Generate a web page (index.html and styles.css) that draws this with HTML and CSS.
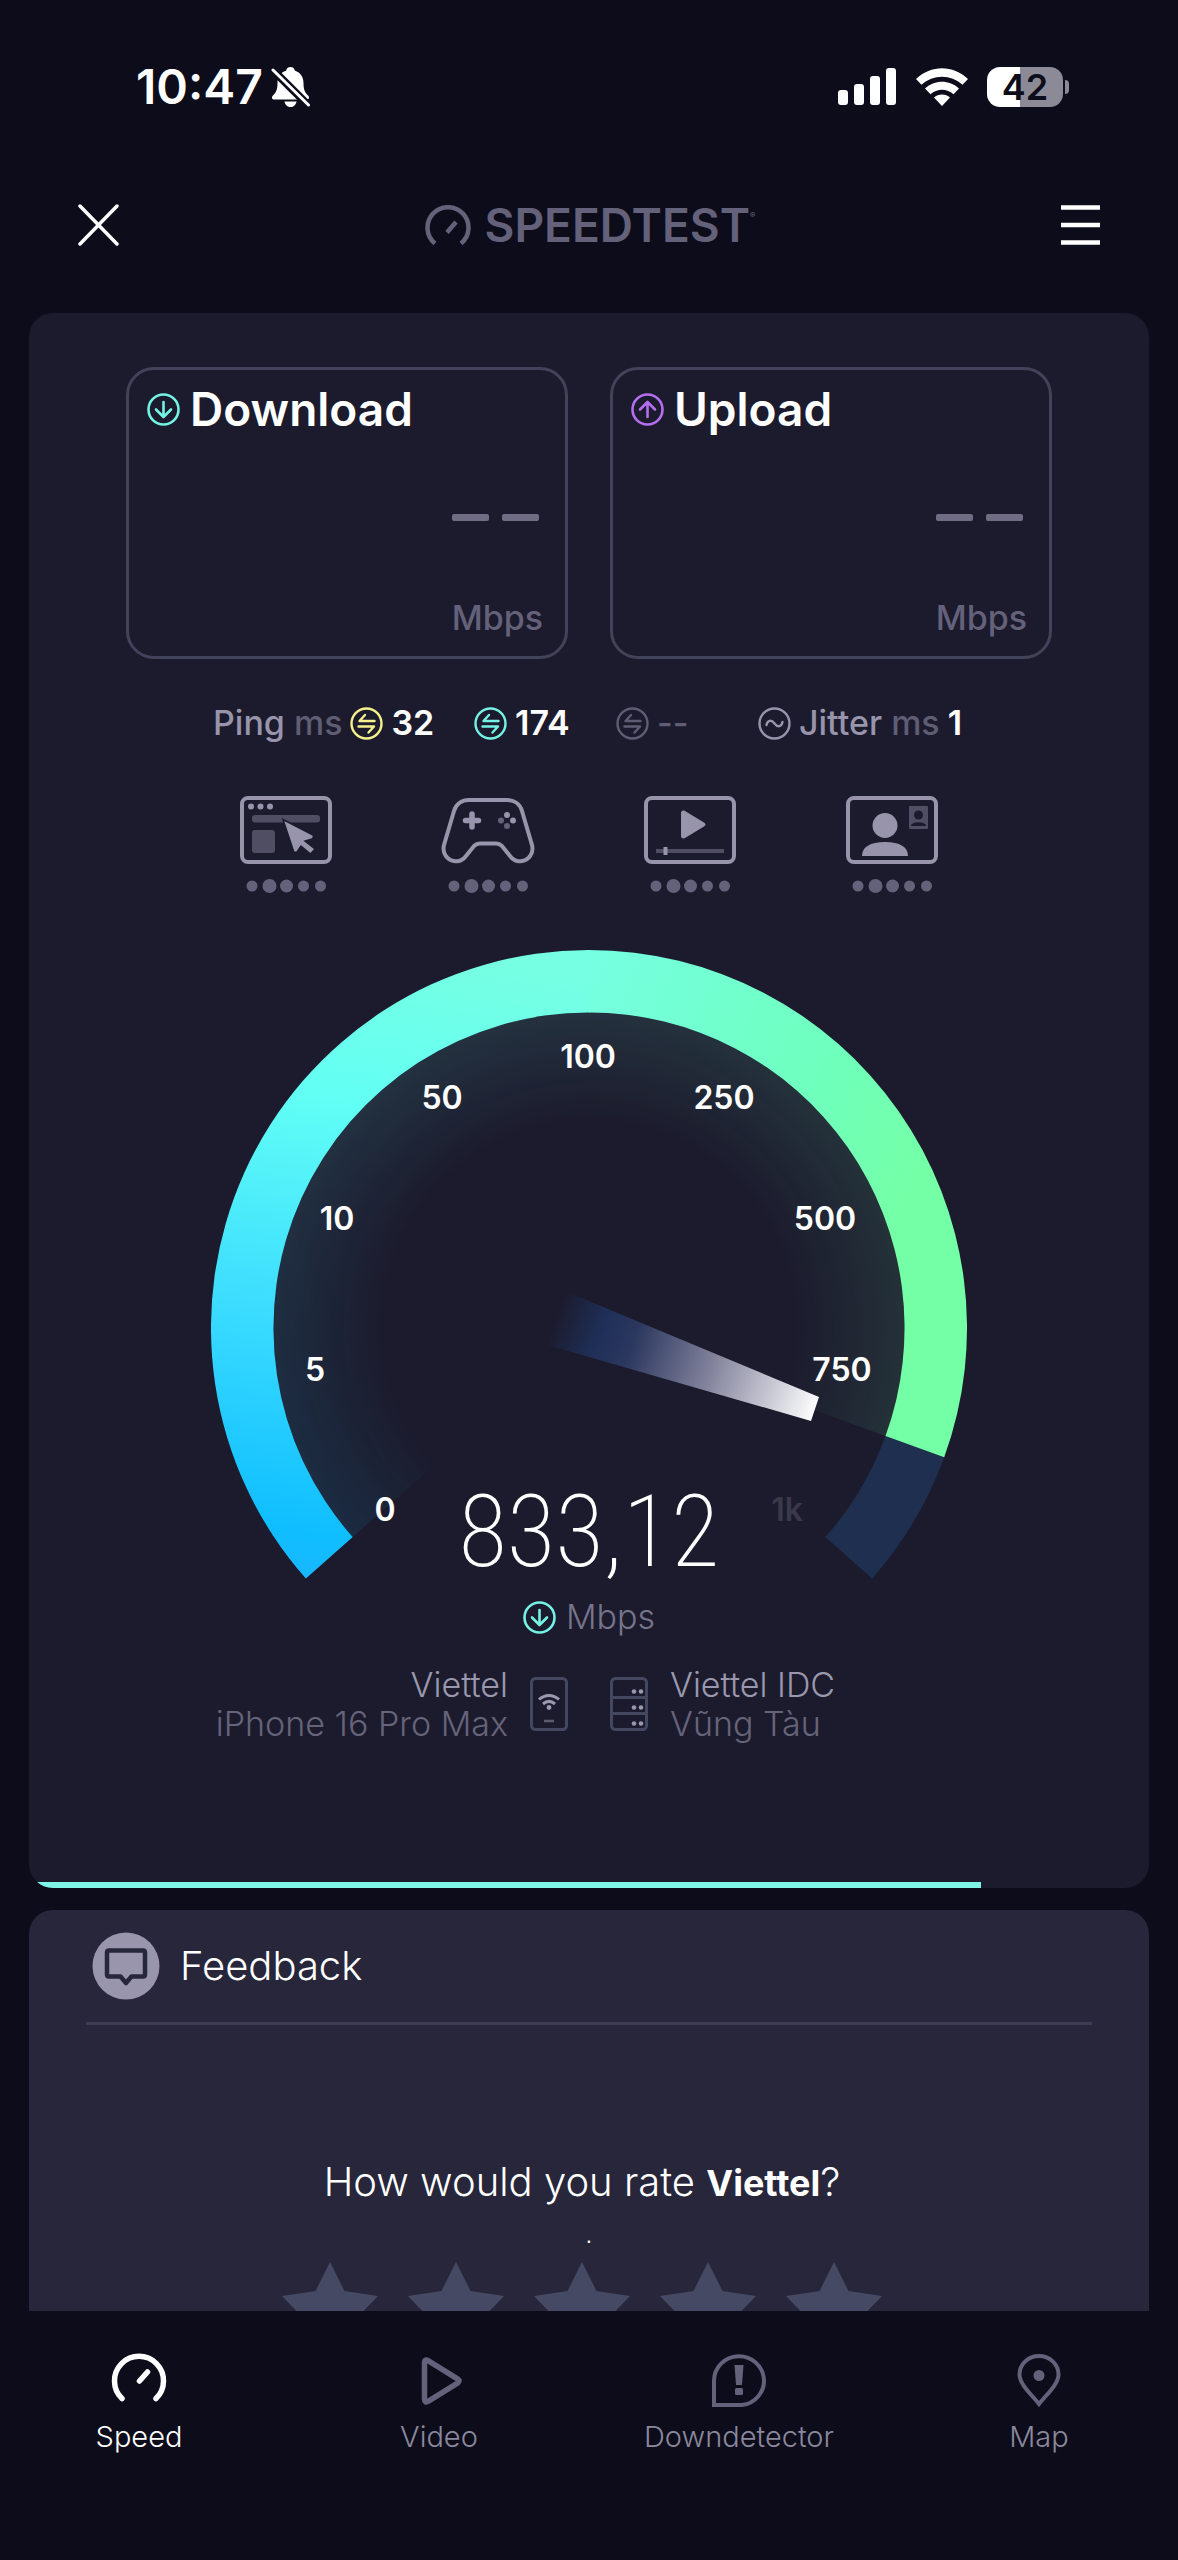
FILE: index.html
```html
<!DOCTYPE html>
<html lang="en">
<head>
<meta charset="utf-8">
<meta name="viewport" content="width=device-width, initial-scale=1">
<title>Speedtest</title>
<link rel="stylesheet" href="styles.css">
</head>
<body>
<svg width="0" height="0" class="defs" aria-hidden="true">
  <defs>
    <symbol id="i-down" viewBox="0 0 33 33"><circle cx="16.5" cy="16.5" r="15" fill="none" stroke="currentColor" stroke-width="2.6"/><path d="M16.5 9v14.5M9 16.5l7.500 7.500 7.500-7.500" fill="none" stroke="currentColor" stroke-width="2.600" stroke-linecap="round" stroke-linejoin="round"/></symbol>
    <symbol id="i-up" viewBox="0 0 33 33"><circle cx="16.5" cy="16.500" r="15" fill="none" stroke="currentColor" stroke-width="2.600"/><path d="M16.500 24V9.500M9 16.500L16.500 9l7.500 7.500" fill="none" stroke="currentColor" stroke-width="2.600" stroke-linecap="round" stroke-linejoin="round"/></symbol>
    <symbol id="i-ping" viewBox="0 0 33 33"><circle cx="16.500" cy="16.500" r="15" fill="none" stroke="currentColor" stroke-width="2.400"/><path d="M24.500 14H9.500l5.500-6M8.500 19.500h15.500l-5.500 6" fill="none" stroke="currentColor" stroke-width="2.400" stroke-linecap="round" stroke-linejoin="round"/></symbol>
    <symbol id="i-jitter" viewBox="0 0 33 33"><circle cx="16.500" cy="16.500" r="15" fill="none" stroke="currentColor" stroke-width="2.400"/><path d="M8.500 18c1-5 5-5.500 8-1.500s7 3.500 8-1.500" fill="none" stroke="currentColor" stroke-width="2.400" stroke-linecap="round"/></symbol>
    <symbol id="i-dots" viewBox="0 0 82 14"><g fill="currentColor"><circle cx="7" cy="7" r="5.500"/><circle cx="24.500" cy="7" r="7"/><circle cx="41.500" cy="7" r="6.500"/><circle cx="58.500" cy="7" r="5.500"/><circle cx="75.500" cy="7" r="5.500"/></g></symbol>
    <symbol id="i-star" viewBox="0 0 96 96"><path d="M48 0L62.500 29 96 34 71 60 78 96 48 78 18 96 25 60 0 34 33.500 29z" fill="currentColor"/></symbol>
  </defs>
</svg>
<div class="app">
  <div class="status">
    <div class="status-side">
      <span class="clock">10:47</span>
      <svg width="40" height="42" viewBox="0 0 40 42"><g fill="#fff"><path d="M19.500 1c2.500 0 4 1.500 4.200 3.500C30 6.500 32.500 11.500 32.500 17c0 7 1.500 9.500 5 13 .8 1 .8 3.500-1.500 3.500H3c-2.300 0-2.300-2.500-1.500-3.500 3.500-3.500 5-6 5-13 0-5.500 2.500-10.500 8.800-12.500C15.500 2.500 17 1 19.500 1z"/><path d="M13.500 35.500h12c-.5 3.500-3 5.500-6 5.500s-5.500-2-6-5.500z"/></g><path d="M2 4l35 35" stroke="#0d0c1b" stroke-width="8"/><path d="M2 4l35.500 35" stroke="#fff" stroke-width="3" stroke-linecap="round"/></svg>
    </div>
    <div class="status-side status-right">
      <svg width="60" height="38" viewBox="0 0 60 38" fill="#fff"><rect x="1" y="22" width="10" height="15" rx="3"/><rect x="17" y="16" width="10" height="21" rx="3"/><rect x="33" y="8" width="10" height="29" rx="3"/><rect x="49" y="0" width="10" height="37" rx="3"/></svg>
      <svg width="52" height="38" viewBox="0 0 52 38" fill="#fff"><path d="M26 38l-8-8.500c4-4 12-4 16 0z"/><path d="M9 20.500c9.500-9 24.500-9 34 0l-5.500 5.800c-6.500-6-16.500-6-23 0z"/><path d="M0 11C15-3.500 37-3.500 52 11l-5.500 5.800C35 6 17 6 5.500 16.800z"/></svg>
      <div class="battery"><span class="battery-body">42</span><span class="battery-nub"></span></div>
    </div>
  </div>

  <header class="topbar">
    <button class="icon-btn" aria-label="Close"><svg width="41" height="42" viewBox="0 0 41 42"><path d="M2 2l37 38M39 2L2 40" stroke="#fff" stroke-width="3.500" stroke-linecap="round"/></svg></button>
    <div class="brand">
      <svg width="46" height="40" viewBox="0 0 46 40" fill="none" stroke="currentColor"><path d="M10 38.500A20.500 20.500 0 1 1 36 38.500" stroke-width="4.500"/><path d="M22 27.500L31 17" stroke-width="4.500"/></svg>
      <span class="brand-name">SPEEDTEST<sup>®</sup></span>
    </div>
    <button class="icon-btn" aria-label="Menu"><svg width="39" height="42" viewBox="0 0 39 42"><path d="M0 3.500h39M0 21h39M0 38.500h39" stroke="#fff" stroke-width="4.500"/></svg></button>
  </header>

  <main class="content">
    <section class="card">
      <div class="results">
        <div class="result">
          <h2 class="result-title"><svg class="ic teal"><use href="#i-down"/></svg>Download</h2>
          <div class="dashes"><i></i><i></i></div>
          <div class="unit">Mbps</div>
        </div>
        <div class="result">
          <h2 class="result-title"><svg class="ic violet"><use href="#i-up"/></svg>Upload</h2>
          <div class="dashes"><i></i><i></i></div>
          <div class="unit">Mbps</div>
        </div>
      </div>

      <div class="latency">
        <div class="stat"><span class="lbl">Ping <span class="dim">ms</span></span><svg class="ic yellow"><use href="#i-ping"/></svg><b>32</b></div>
        <div class="stat"><svg class="ic teal"><use href="#i-ping"/></svg><b>174</b></div>
        <div class="stat dim"><svg class="ic"><use href="#i-ping"/></svg><span>--</span></div>
        <div class="stat lbl"><svg class="ic"><use href="#i-jitter"/></svg><span>Jitter <span class="dim">ms</span></span><b>1</b></div>
      </div>

      <div class="quality">
        <div class="q">
          <svg width="92" height="68" viewBox="0 0 92 68"><rect x="2" y="2" width="88" height="64" rx="6" fill="none" stroke="#9794ab" stroke-width="4"/><g fill="#9794ab"><circle cx="11" cy="10.500" r="3"/><circle cx="20.500" cy="10.500" r="3"/><circle cx="30" cy="10.500" r="3"/></g><rect x="12" y="19" width="68" height="7.500" rx="3" fill="#504e62"/><rect x="12" y="34" width="23" height="23" rx="3" fill="#504e62"/><path d="M43 23.500l30 15.500q1.500 2.500-1 4l-7 2 10 8-4.500 5-9.500-8-4 6q-2.500 1-3.500-1z" fill="#9794ab" stroke="#1c1b2d" stroke-width="1.500"/></svg>
          <svg class="dots"><use href="#i-dots"/></svg>
        </div>
        <div class="q">
          <svg width="94" height="68" viewBox="0 0 94 68"><path d="M28 4h38c7 0 13 4 15 11l10 34c2 8-3 15-10 16-5 1-9-1-12-5l-8-10c-2-2-3-2.500-6-2.500H39c-3 0-4 .5-6 2.500l-8 10c-3 4-7 6-12 5C6 64 1 57 3 49l10-34C15 8 21 4 28 4z" fill="none" stroke="#9794ab" stroke-width="4"/><path d="M31 18v13M24.500 24.500h13" stroke="#9794ab" stroke-width="5.500" stroke-linecap="round"/><circle cx="66" cy="19" r="3" fill="#9794ab"/><circle cx="72" cy="24.500" r="3" fill="#9794ab"/><circle cx="60" cy="24.500" r="3" fill="#64627a"/><circle cx="66" cy="30" r="3" fill="#64627a"/></svg>
          <svg class="dots"><use href="#i-dots"/></svg>
        </div>
        <div class="q">
          <svg width="92" height="68" viewBox="0 0 92 68"><rect x="2" y="2" width="88" height="64" rx="6" fill="none" stroke="#9794ab" stroke-width="4"/><path d="M37 17c0-2 2-3 4-2l19 11.500c2 1 2 3 0 4L41 42c-2 1-4 0-4-2z" fill="#9794ab"/><path d="M12 55h68" stroke="#504e62" stroke-width="4"/><path d="M21.500 51v8" stroke="#9794ab" stroke-width="4"/></svg>
          <svg class="dots"><use href="#i-dots"/></svg>
        </div>
        <div class="q">
          <svg width="92" height="68" viewBox="0 0 92 68"><rect x="2" y="2" width="88" height="64" rx="6" fill="none" stroke="#9794ab" stroke-width="4"/><circle cx="39" cy="29.500" r="12.500" fill="#9794ab"/><path d="M16 60c0-9 8-14 23-14s23 5 23 14z" fill="#9794ab"/><rect x="63" y="10" width="19" height="23" rx="1" fill="#504e62"/><circle cx="72.500" cy="19" r="4.500" fill="#1c1b2d"/><path d="M65 30c0-5 15-5 15 0z" fill="#1c1b2d"/></svg>
          <svg class="dots"><use href="#i-dots"/></svg>
        </div>
      </div>

      <div class="gauge">
        <svg class="dial" viewBox="0 0 756 636" role="img" aria-label="Speed gauge">
          <defs>
            <linearGradient id="gl" gradientUnits="userSpaceOnUse" x1="90" y1="620" x2="190" y2="0"><stop offset="0" stop-color="#18b8ff"/><stop offset=".06" stop-color="#0fbeff"/><stop offset=".4" stop-color="#3bdcff"/><stop offset=".75" stop-color="#62fff5"/><stop offset="1" stop-color="#76ffe2"/></linearGradient>
            <linearGradient id="gr" gradientUnits="userSpaceOnUse" x1="378" y1="0" x2="740" y2="160"><stop offset="0" stop-color="#76ffe2"/><stop offset=".65" stop-color="#6fffbe"/><stop offset="1" stop-color="#74ffa6"/></linearGradient>
            <radialGradient id="fade" gradientUnits="userSpaceOnUse" cx="378" cy="378" r="316"><stop offset=".64" stop-color="#fff" stop-opacity="0"/><stop offset="1" stop-color="#fff" stop-opacity=".1"/></radialGradient>
            <mask id="m"><rect width="756" height="636" fill="url(#fade)"/></mask>
            <linearGradient id="ndl" gradientUnits="userSpaceOnUse" x1="334" y1="362" x2="606" y2="460"><stop offset=".04" stop-color="#1e2f57" stop-opacity="0"/><stop offset=".2" stop-color="#1e2f57"/><stop offset=".32" stop-color="#2b375e"/><stop offset=".6" stop-color="#80809a"/><stop offset="1" stop-color="#fff"/></linearGradient>
          </defs>
          <g mask="url(#m)"><path d="M378 378L141.700 587.100A315.500 315.500 0 0 1 378 62.500z" fill="url(#gl)"/><path d="M378 378V62.500A315.500 315.500 0 0 1 674.500 485.900z" fill="url(#gr)"/></g>
          <path d="M733.200 507.300A378 378 0 0 1 661.100 628.500L614.300 587.100A315.500 315.500 0 0 0 674.500 485.900z" fill="#1f2f50"/>
          <path d="M94.900 628.500A378 378 0 0 1 379 0V62.500A315.500 315.500 0 0 0 141.700 587.100z" fill="url(#gl)"/>
          <path d="M378 0A378 378 0 0 1 733.200 507.300L674.500 485.900A315.500 315.500 0 0 0 378 62.500z" fill="url(#gr)"/>
          <path d="M356 342L608 447 600 471 333 394z" fill="url(#ndl)"/>
          <g class="ticks"><text x="174" y="571">0</text><text x="104" y="431">5</text><text x="126" y="280">10</text><text x="231" y="159">50</text><text x="377" y="118">100</text><text x="513" y="159">250</text><text x="614" y="280">500</text><text x="631" y="431">750</text><text class="off" x="576" y="571">1k</text></g>
        </svg>
        <div class="reading">833,12</div>
      </div>
      <div class="reading-unit"><svg class="ic teal"><use href="#i-down"/></svg>Mbps</div>

      <div class="route">
        <div class="route-end route-left">
          <p>Viettel<br><span class="dim">iPhone 16 Pro Max</span></p>
          <svg width="38" height="54" viewBox="0 0 38 54" fill="none"><rect x="1.500" y="1.500" width="35" height="51" rx="4" stroke="#434760" stroke-width="3"/><g stroke="#9a98ae" stroke-width="3"><path d="M9 22.500c6-5.500 14-5.500 20 0"/><path d="M13 27c4-3.500 8-3.500 12 0"/></g><circle cx="19" cy="30.500" r="2.400" fill="#9a98ae"/><path d="M14 44h10" stroke="#5c5b72" stroke-width="2.500"/></svg>
        </div>
        <div class="route-end">
          <svg width="38" height="54" viewBox="0 0 38 54" fill="none"><rect x="1.500" y="1.500" width="35" height="51" rx="4" stroke="#434760" stroke-width="3"/><path d="M2 20.500h34M2 36.500h34" stroke="#434760" stroke-width="3"/><g fill="#9a98ae"><circle cx="24" cy="14.500" r="2.300"/><circle cx="31" cy="14.500" r="2.300"/><circle cx="24" cy="30.500" r="2.300"/><circle cx="31" cy="30.500" r="2.300"/><circle cx="24" cy="46.500" r="2.300"/><circle cx="31" cy="46.500" r="2.300"/></g></svg>
          <p>Viettel IDC<br><span class="dim">Vũng Tàu</span></p>
        </div>
      </div>
      <div class="progress"><div class="progress-bar" style="width:85%"></div></div>
    </section>

    <section class="card feedback">
      <h2 class="feedback-head">
        <svg width="68" height="68" viewBox="0 0 68 68"><circle cx="34" cy="34" r="33.500" fill="#9895ac"/><path d="M17 18.500h34q2 0 2 2v22q0 2-2 2H39.500L34 51l-5.500-6.500H17q-2 0-2-2v-22q0-2 2-2z" fill="none" stroke="#27263b" stroke-width="4.500" stroke-linejoin="round"/></svg>
        Feedback
      </h2>
      <p class="question">How would you rate <b>Viettel</b>?</p>
      <p class="point">.</p>
      <div class="stars">
        <button aria-label="1 star"><svg><use href="#i-star"/></svg></button>
        <button aria-label="2 stars"><svg><use href="#i-star"/></svg></button>
        <button aria-label="3 stars"><svg><use href="#i-star"/></svg></button>
        <button aria-label="4 stars"><svg><use href="#i-star"/></svg></button>
        <button aria-label="5 stars"><svg><use href="#i-star"/></svg></button>
      </div>
    </section>
  </main>

  <nav class="tabs">
    <a href="#speed" class="tab active"><svg width="56" height="56" viewBox="0 0 56 56" fill="none" stroke="currentColor" stroke-width="5.500" stroke-linecap="round"><path d="M11 46.500A24.500 24.500 0 1 1 45 46.500"/><path d="M28.500 29l8-9"/></svg>Speed</a>
    <a href="#video" class="tab"><svg width="56" height="56" viewBox="0 0 56 56" fill="none" stroke="currentColor" stroke-width="5.500" stroke-linejoin="round"><path d="M13.500 11q0-4.500 4-2.200l29 18q3 2.200 0 4.400l-29 18q-4 2.300-4-2.200z"/></svg>Video</a>
    <a href="#downdetector" class="tab"><svg width="56" height="56" viewBox="0 0 56 56" fill="none"><path d="M3 53V28.500A25 24.500 0 1 1 31 53z" stroke="currentColor" stroke-width="4"/><path d="M23.500 13h9l-1.500 20h-6z" fill="currentColor"/><rect x="24" y="36" width="8" height="7" rx="1.500" fill="currentColor"/></svg>Downdetector</a>
    <a href="#map" class="tab"><svg width="56" height="56" viewBox="0 0 56 56" fill="none"><path d="M28 52C20 42 8.500 32 8.500 22.500a19.500 18.500 0 0 1 39 0C47.500 32 36 42 28 52z" stroke="currentColor" stroke-width="4"/><circle cx="28" cy="23.500" r="5.500" fill="currentColor"/></svg>Map</a>
  </nav>
</div>
</body>
</html>
```
FILE: styles.css
```css
* { box-sizing: border-box; }
body {
  margin: 0;
  background: #0d0c1b;
  color: #fff;
  font-family: Inter, "Noto Sans", sans-serif;
}
h2, p { margin: 0; font-weight: inherit; font-size: inherit; }
button { background: none; border: 0; padding: 0; color: inherit; font: inherit; }
svg { display: block; flex: none; }
.defs { position: absolute; }

.app { height: 100vh; display: flex; flex-direction: column; }

.status {
  flex: none;
  height: 174px;
  padding: 0 109px 0 136px;
  display: flex;
  align-items: center;
  justify-content: space-between;
}
.status-side { display: flex; align-items: center; gap: 8px; }
.status-right { gap: 19px; }
.clock { font-size: 48px; font-weight: 600; line-height: 48px; }
.battery { display: flex; align-items: center; gap: 2px; }
.battery-body {
  width: 76px;
  height: 40px;
  border-radius: 13px;
  background: linear-gradient(90deg, #fff 43%, #8b8a96 43%);
  color: #0d0c1b;
  font-size: 36px;
  font-weight: 600;
  line-height: 40px;
  text-align: center;
}
.battery-nub { width: 4px; height: 14px; border-radius: 0 4px 4px 0; background: #8b8a96; }

.topbar {
  flex: none;
  height: 102px;
  padding: 0 78px;
  display: flex;
  align-items: center;
  justify-content: space-between;
}
.brand { display: flex; align-items: center; gap: 14px; color: #64617a; }
.brand-name { font-size: 46px; font-weight: 600; line-height: 48px; }
.brand-name sup { font-size: 8px; line-height: 8px; vertical-align: 24px; }

.content {
  flex: 1;
  min-height: 0;
  overflow: hidden;
  padding: 37px 29px 0;
  display: flex;
  flex-direction: column;
  gap: 22px;
}
.card { flex: none; border-radius: 24px; background: #1c1b2d; overflow: hidden; }

.ic { width: 33px; height: 33px; }
.teal { color: #74f2e4; }
.violet { color: #b66ef0; }
.yellow { color: #f5f08c; }
.lbl { color: #9794ab; }
.dim { color: #5f5d73; }

.results { display: grid; grid-template-columns: 1fr 1fr; gap: 42px; padding: 54px 97px 0; }
.result { border: 3px solid #42425a; border-radius: 28px; padding: 14px 22px 18px 18px; }
.result-title {
  display: flex;
  align-items: center;
  gap: 10px;
  font-size: 46px;
  font-weight: 600;
  line-height: 50px;
}
.dashes { display: flex; justify-content: flex-end; gap: 13px; margin: 80px 4px 77px 0; }
.dashes i { width: 37px; height: 7px; border-radius: 2px; background: #6f6c84; }
.unit { text-align: right; font-size: 34px; font-weight: 500; line-height: 40px; color: #64617a; }

.latency {
  display: grid;
  grid-template-columns: 261fr 142fr 142fr 207fr;
  max-width: 752px;
  margin: 44px auto 0;
  font-size: 34px;
  font-weight: 500;
  line-height: 40px;
}
.stat { display: flex; align-items: center; gap: 8px; white-space: nowrap; }
.stat b { font-weight: 600; color: #fff; }

.quality { display: grid; grid-template-columns: repeat(4, 1fr); max-width: 808px; margin: 53px auto 0; }
.q { display: flex; flex-direction: column; align-items: center; gap: 15px; }
.dots { width: 82px; height: 14px; color: #64617a; }

.gauge { display: grid; max-width: 756px; margin: 57px auto 0; }
.dial { grid-area: 1 / 1; width: 100%; height: auto; }
.ticks { fill: #fff; font-size: 32px; font-weight: 600; text-anchor: middle; }
.ticks .off { fill: #3a394c; }
.reading {
  grid-area: 1 / 1;
  align-self: end;
  margin-bottom: 9px;
  text-align: center;
  font-family: "Roboto Condensed", Roboto, sans-serif;
  font-size: 100px;
  font-weight: 200;
  line-height: 90px;
}
.reading-unit {
  display: flex;
  align-items: center;
  justify-content: center;
  gap: 10px;
  margin-top: 11px;
  font-size: 34px;
  font-weight: 300;
  line-height: 40px;
  color: #77758c;
}

.route {
  display: grid;
  grid-template-columns: 1fr 1fr;
  gap: 42px;
  margin-top: 28px;
  font-size: 34px;
  font-weight: 300;
  line-height: 39px;
  color: #9a98ae;
}
.route-end { display: flex; align-items: center; gap: 22px; }
.route-left { justify-content: flex-end; text-align: right; }
.route .dim { color: #66647a; }

.progress { margin-top: 139px; height: 6px; }
.progress-bar { height: 6px; background: #7ff5e6; }

.feedback { background: #27263b; padding: 22px 57px 40px; font-size: 40px; font-weight: 300; line-height: 48px; }
.feedback-head {
  display: flex;
  align-items: center;
  gap: 20px;
  padding: 0 0 22px 6px;
  border-bottom: 3px solid #3c3c52;
}
.question { margin-top: 133px; padding-right: 14px; text-align: center; }
.question b { font-size: 36px; font-weight: 700; }
.point { margin-top: 12px; text-align: center; font-size: 24px; line-height: 32px; }
.stars { display: flex; justify-content: center; gap: 30px; margin-top: 11px; padding-right: 14px; }
.stars svg { width: 96px; height: 96px; color: #454963; }

.tabs {
  flex: none;
  height: 249px;
  padding: 41px 39px 0;
  display: flex;
  align-items: flex-start;
  justify-content: space-between;
}
.tab {
  width: 200px;
  display: flex;
  flex-direction: column;
  align-items: center;
  gap: 13px;
  color: #8a889c;
  font-size: 29px;
  font-weight: 300;
  line-height: 32px;
  text-decoration: none;
}
.tab svg { color: #64617a; }
.tab.active, .tab.active svg { color: #fff; }
```
